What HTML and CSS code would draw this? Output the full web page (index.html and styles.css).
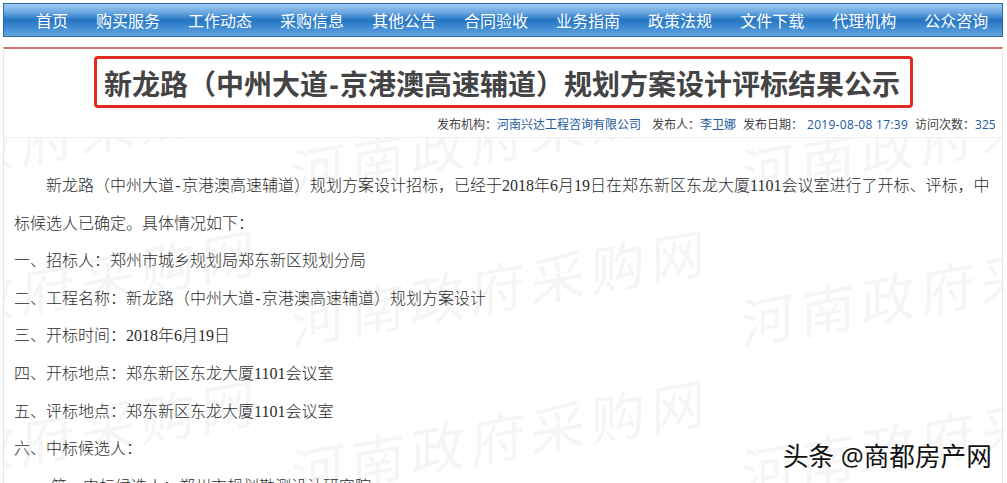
FILE: index.html
```html
<!DOCTYPE html>
<html lang="zh-CN">
<head>
    <meta charset="UTF-8">
    <title>河南政府采购网</title>
    <link rel="stylesheet" href="styles.css">
</head>
<body>
    <nav class="nav">
        <a>首页</a>
        <a>购买服务</a>
        <a>工作动态</a>
        <a>采购信息</a>
        <a>其他公告</a>
        <a>合同验收</a>
        <a>业务指南</a>
        <a>政策法规</a>
        <a>文件下载</a>
        <a>代理机构</a>
        <a>公众咨询</a>
    </nav>

    <div class="article">
        <h1 class="title">新龙路（中州大道<span class="title-dash">-</span>京港澳高速辅道）规划方案设计评标结果公示</h1>
        <div class="info">
            <span class="org">发布机构：<b>河南兴达工程咨询有限公司</b></span>
            <span class="author">发布人：<b>李卫娜</b></span>
            <span class="date">发布日期：<b>2019-08-08 17:39</b></span>
            <span class="visits">访问次数：<b>325</b></span>
        </div>
        <div class="content">
            <svg class="watermark" width="1000" height="346">
                <defs>
                    <pattern id="mark" x="-163" y="-78" width="450" height="150" patternUnits="userSpaceOnUse">
                        <g class="mark-text" transform="translate(0 135) skewY(-10)">
                            <text x="0" y="0">河南政府采购网</text>
                        </g>
                    </pattern>
                </defs>
                <rect width="1000" height="346" fill="url(#mark)"/>
            </svg>
            <div class="text">
                <p class="indent">新龙路（中州大道<i>-</i>京港澳高速辅道）规划方案设计招标，已经于2018年6月19日在郑东新区东龙大厦1101会议室进行了开标、评标，中<br>标候选人已确定。具体情况如下：</p>
                <p>一、招标人：郑州市城乡规划局郑东新区规划分局</p>
                <p>二、工程名称：新龙路（中州大道<i>-</i>京港澳高速辅道）规划方案设计</p>
                <p>三、开标时间：2018年6月19日</p>
                <p>四、开标地点：郑东新区东龙大厦1101会议室</p>
                <p>五、评标地点：郑东新区东龙大厦1101会议室</p>
                <p>六、中标候选人：</p>
                <p class="first">第一中标候选人：郑州市规划勘测设计研究院</p>
            </div>
        </div>
    </div>

    <div class="source">头条 @商都房产网</div>
</body>
</html>
```
FILE: styles.css
```css
body {
    margin: 0;
    padding: 3px 4px 0 3px;
    height: 483px;
    overflow: hidden;
    box-sizing: border-box;
    background: #fff;
    color: #444;
    font-family: "Open Sans", "Noto Sans CJK SC", sans-serif;
}
.nav {
    display: flex;
    gap: 28px;
    box-sizing: border-box;
    height: 34px;
    padding-left: 32px;
    border: 1px solid #2468a8;
    background: linear-gradient(#9fcaf1 0%, #6faae2 25%, #2474c2 50%, #3c88d0 70%, #62a5e2 100%);
    color: #fff;
    font-size: 16px;
    line-height: 34px;
    white-space: nowrap;
}
.article {
    height: 436px;
    margin-top: 10px;
    border: 1px solid #e4e4e4;
    border-top: 2px solid #d6706f;
    border-bottom: none;
    box-sizing: border-box;
    overflow: hidden;
}
.title {
    box-sizing: border-box;
    width: 819px;
    height: 52px;
    margin: 7px 0 0 90px;
    padding-left: 7px;
    border: 3px solid #e12a20;
    border-radius: 4px;
    color: #444;
    font-size: 28px;
    font-weight: bold;
    line-height: 50px;
    white-space: nowrap;
}
.title-dash {
    display: inline-block;
    width: 12px;
    text-align: center;
}
.info {
    display: flex;
    height: 29px;
    padding-left: 433px;
    border-bottom: 1px solid #f0f0f0;
    font-size: 12px;
    line-height: 34px;
    white-space: nowrap;
}
.info b {
    color: #1b5a9b;
    font-weight: normal;
}
.org {
    width: 215px;
}
.author {
    width: 91px;
}
.date {
    width: 172px;
}
.date b {
    margin-left: 4px;
    letter-spacing: 0.3px;
}
.content {
    position: relative;
}
.watermark {
    position: absolute;
    left: 0;
    top: 0;
}
.mark-text {
    fill: #f5f5f5;
    font-family: "Noto Sans CJK SC", sans-serif;
    font-size: 54px;
    letter-spacing: 6px;
}
.text {
    position: relative;
    padding: 29px 0 0 10px;
    color: #2c2c2c;
    font-family: "Liberation Serif", "Noto Sans CJK SC", serif;
    font-size: 16px;
    font-weight: 300;
    line-height: 37.6px;
    white-space: nowrap;
}
.text p {
    margin: 0;
}
.text .indent {
    text-indent: 32px;
}
.text .first {
    text-indent: 37px;
}
.text i {
    display: inline-block;
    width: 8px;
    font-style: normal;
    text-align: center;
    text-indent: 0;
}
.source {
    position: absolute;
    left: 783px;
    top: 439px;
    color: #111;
    font-size: 25.6px;
    line-height: 36px;
    white-space: nowrap;
    text-shadow: -1px -1px 0 #fff;
}
```
